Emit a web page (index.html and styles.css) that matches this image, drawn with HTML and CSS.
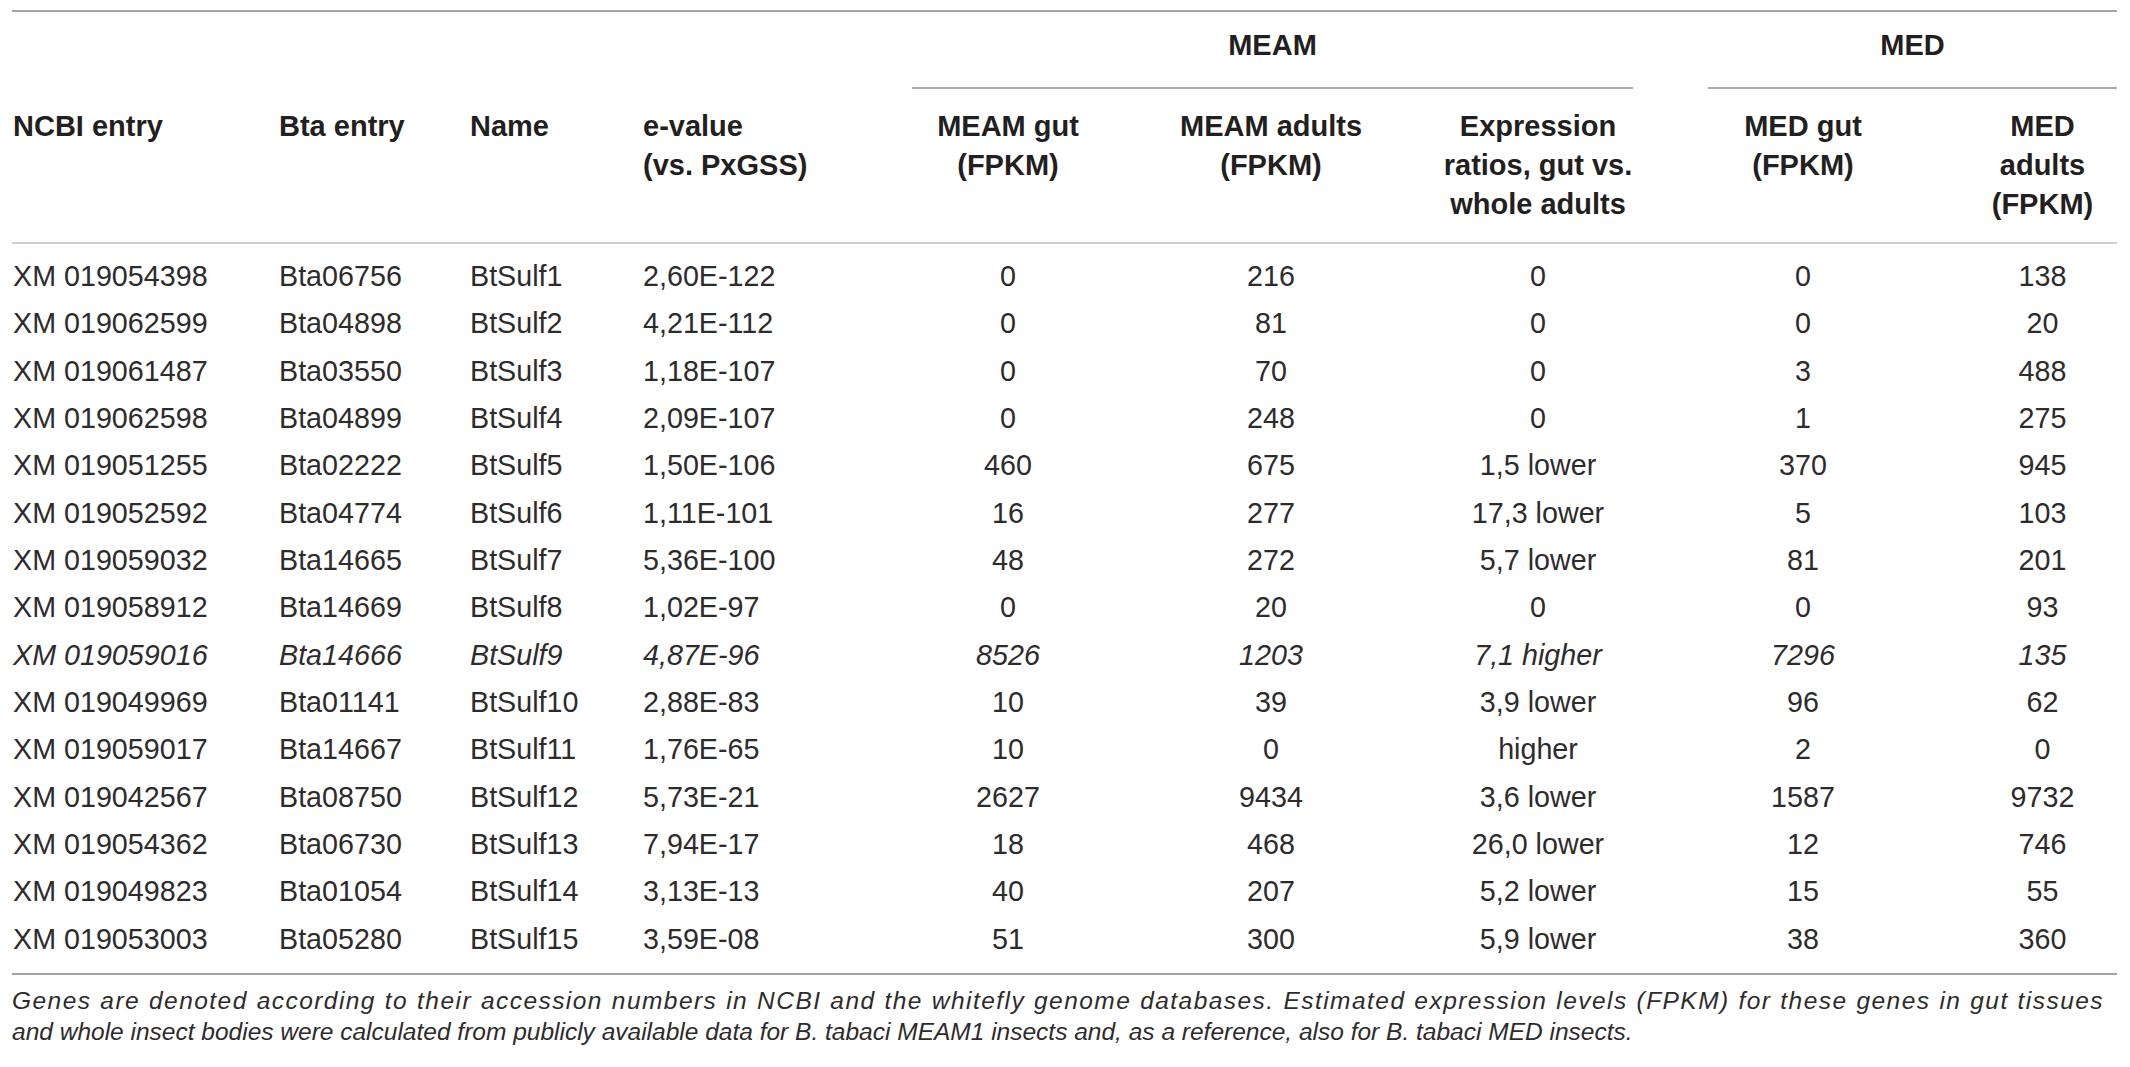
FILE: index.html
```html
<!DOCTYPE html>
<html lang="en">
<head>
<meta charset="utf-8">
<title>Table</title>
<link rel="stylesheet" href="styles.css">
</head>
<body>
<div class="table">
  <div class="head">
    <div class="gcell g-blank"></div>
    <div class="gcell g-meam"><div class="gline">MEAM</div></div>
    <div class="gcell g-med"><div class="gline">MED</div></div>
    <div class="hcell c1">NCBI entry</div>
    <div class="hcell c2">Bta entry</div>
    <div class="hcell c3">Name</div>
    <div class="hcell c4">e-value<br>(vs. PxGSS)</div>
    <div class="hcell cc">MEAM gut<br>(FPKM)</div>
    <div class="hcell cc">MEAM adults<br>(FPKM)</div>
    <div class="hcell cc">Expression<br>ratios, gut vs.<br>whole adults</div>
    <div class="hcell cc c8">MED gut<br>(FPKM)</div>
    <div class="hcell cc c9">MED<br>adults<br>(FPKM)</div>
  </div>
  <div class="body">
    <div class="row"><span class="c1">XM 019054398</span><span class="c2">Bta06756</span><span class="c3">BtSulf1</span><span class="c4">2,60E-122</span><span class="cc">0</span><span class="cc">216</span><span class="cc">0</span><span class="cc c8">0</span><span class="cc c9">138</span></div>
    <div class="row"><span class="c1">XM 019062599</span><span class="c2">Bta04898</span><span class="c3">BtSulf2</span><span class="c4">4,21E-112</span><span class="cc">0</span><span class="cc">81</span><span class="cc">0</span><span class="cc c8">0</span><span class="cc c9">20</span></div>
    <div class="row"><span class="c1">XM 019061487</span><span class="c2">Bta03550</span><span class="c3">BtSulf3</span><span class="c4">1,18E-107</span><span class="cc">0</span><span class="cc">70</span><span class="cc">0</span><span class="cc c8">3</span><span class="cc c9">488</span></div>
    <div class="row"><span class="c1">XM 019062598</span><span class="c2">Bta04899</span><span class="c3">BtSulf4</span><span class="c4">2,09E-107</span><span class="cc">0</span><span class="cc">248</span><span class="cc">0</span><span class="cc c8">1</span><span class="cc c9">275</span></div>
    <div class="row"><span class="c1">XM 019051255</span><span class="c2">Bta02222</span><span class="c3">BtSulf5</span><span class="c4">1,50E-106</span><span class="cc">460</span><span class="cc">675</span><span class="cc">1,5 lower</span><span class="cc c8">370</span><span class="cc c9">945</span></div>
    <div class="row"><span class="c1">XM 019052592</span><span class="c2">Bta04774</span><span class="c3">BtSulf6</span><span class="c4">1,11E-101</span><span class="cc">16</span><span class="cc">277</span><span class="cc">17,3 lower</span><span class="cc c8">5</span><span class="cc c9">103</span></div>
    <div class="row"><span class="c1">XM 019059032</span><span class="c2">Bta14665</span><span class="c3">BtSulf7</span><span class="c4">5,36E-100</span><span class="cc">48</span><span class="cc">272</span><span class="cc">5,7 lower</span><span class="cc c8">81</span><span class="cc c9">201</span></div>
    <div class="row"><span class="c1">XM 019058912</span><span class="c2">Bta14669</span><span class="c3">BtSulf8</span><span class="c4">1,02E-97</span><span class="cc">0</span><span class="cc">20</span><span class="cc">0</span><span class="cc c8">0</span><span class="cc c9">93</span></div>
    <div class="row italic"><span class="c1">XM 019059016</span><span class="c2">Bta14666</span><span class="c3">BtSulf9</span><span class="c4">4,87E-96</span><span class="cc">8526</span><span class="cc">1203</span><span class="cc">7,1 higher</span><span class="cc c8">7296</span><span class="cc c9">135</span></div>
    <div class="row"><span class="c1">XM 019049969</span><span class="c2">Bta01141</span><span class="c3">BtSulf10</span><span class="c4">2,88E-83</span><span class="cc">10</span><span class="cc">39</span><span class="cc">3,9 lower</span><span class="cc c8">96</span><span class="cc c9">62</span></div>
    <div class="row"><span class="c1">XM 019059017</span><span class="c2">Bta14667</span><span class="c3">BtSulf11</span><span class="c4">1,76E-65</span><span class="cc">10</span><span class="cc">0</span><span class="cc">higher</span><span class="cc c8">2</span><span class="cc c9">0</span></div>
    <div class="row"><span class="c1">XM 019042567</span><span class="c2">Bta08750</span><span class="c3">BtSulf12</span><span class="c4">5,73E-21</span><span class="cc">2627</span><span class="cc">9434</span><span class="cc">3,6 lower</span><span class="cc c8">1587</span><span class="cc c9">9732</span></div>
    <div class="row"><span class="c1">XM 019054362</span><span class="c2">Bta06730</span><span class="c3">BtSulf13</span><span class="c4">7,94E-17</span><span class="cc">18</span><span class="cc">468</span><span class="cc">26,0 lower</span><span class="cc c8">12</span><span class="cc c9">746</span></div>
    <div class="row"><span class="c1">XM 019049823</span><span class="c2">Bta01054</span><span class="c3">BtSulf14</span><span class="c4">3,13E-13</span><span class="cc">40</span><span class="cc">207</span><span class="cc">5,2 lower</span><span class="cc c8">15</span><span class="cc c9">55</span></div>
    <div class="row"><span class="c1">XM 019053003</span><span class="c2">Bta05280</span><span class="c3">BtSulf15</span><span class="c4">3,59E-08</span><span class="cc">51</span><span class="cc">300</span><span class="cc">5,9 lower</span><span class="cc c8">38</span><span class="cc c9">360</span></div>
  </div>
  <div class="note">
    <span class="note-line justify">Genes are denoted according to their accession numbers in NCBI and the whitefly genome databases. Estimated expression levels (FPKM) for these genes in gut tissues</span>
    <span class="note-line">and whole insect bodies were calculated from publicly available data for B. tabaci MEAM1 insects and, as a reference, also for B. tabaci MED insects.</span>
  </div>
</div>
</body>
</html>
```
FILE: styles.css
```css
html, body {
  margin: 0;
  padding: 0;
  background: #ffffff;
}
body {
  font-family: "Liberation Sans", Arial, sans-serif;
  color: #231f20;
}
.table {
  box-sizing: border-box;
  width: 2105px;
  margin: 10px 0 0 12px;
  border-top: 2px solid #a4a4a4;
}
.head,
.row {
  display: grid;
  grid-template-columns: 253px 193px 173px 249px 256px 270px 264px 266px 181px;
}
.head {
  border-bottom: 2px solid #cfcfcf;
  font-weight: bold;
  font-size: 29px;
  line-height: 39px;
}
.gcell {
  height: 77px;
  box-sizing: border-box;
}
.g-blank { grid-column: 1 / 5; }
.g-meam { grid-column: 5 / 8; padding: 0 37px 0 32px; }
.g-med { grid-column: 8 / 10; padding: 0 0 0 38px; }
.gline {
  box-sizing: border-box;
  height: 77px;
  padding-top: 14px;
  text-align: center;
  border-bottom: 2px solid #aaaaaa;
}
.hcell {
  padding: 18px 0 18px 0;
}
.c1 { padding-left: 1px; }
.c2 { padding-left: 14px; }
.c3 { padding-left: 12px; }
.c4 { padding-left: 12px; }
.cc { text-align: center; }
.c9 { padding-left: 32px; }
.body {
  padding: 9px 0 10px 0;
  border-bottom: 2px solid #a4a4a4;
  font-size: 28.7px;
  line-height: 47.35px;
  color: #2e2b2c;
}
.row span { display: block; white-space: nowrap; }
.italic { font-style: italic; }
.note {
  width: 2092px;
  margin: 10px 0 0 0;
  font-style: italic;
  font-size: 24.5px;
  line-height: 31px;
  color: #2e2b2c;
}
.note-line {
  display: block;
  white-space: nowrap;
}
.note-line.justify {
  white-space: normal;
  letter-spacing: 1.45px;
  text-align: justify;
  text-align-last: justify;
}
```
